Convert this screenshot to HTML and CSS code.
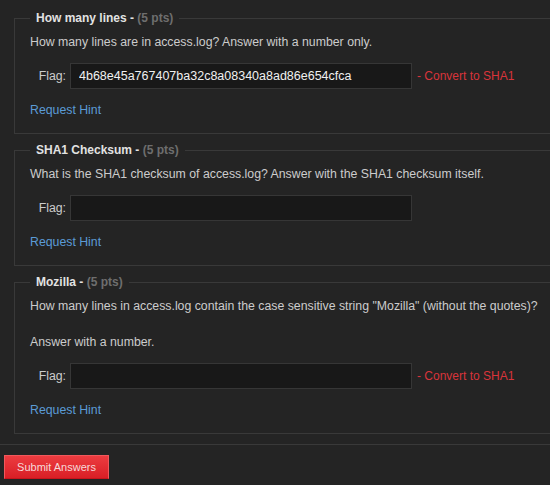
FILE: index.html
```html
<!DOCTYPE html>
<html>
<head>
<meta charset="utf-8">
<link rel="stylesheet" href="styles.css">
</head>
<body>
<div class="page">
  <form class="quiz">
    <fieldset class="question">
      <legend class="q-title">How many lines - <span class="pts">(5 pts)</span></legend>
      <p class="q-desc">How many lines are in access.log? Answer with a number only.</p>
      <div class="flag-row">
        <label class="flag-label">Flag:</label>
        <input class="flag-input" type="text" value="4b68e45a767407ba32c8a08340a8ad86e654cfca">
        <a class="convert">- Convert to SHA1</a>
      </div>
      <a class="hint">Request Hint</a>
    </fieldset>

    <fieldset class="question">
      <legend class="q-title">SHA1 Checksum - <span class="pts">(5 pts)</span></legend>
      <p class="q-desc">What is the SHA1 checksum of access.log? Answer with the SHA1 checksum itself.</p>
      <div class="flag-row">
        <label class="flag-label">Flag:</label>
        <input class="flag-input" type="text" value="">
      </div>
      <a class="hint">Request Hint</a>
    </fieldset>

    <fieldset class="question">
      <legend class="q-title">Mozilla - <span class="pts">(5 pts)</span></legend>
      <p class="q-desc">How many lines in access.log contain the case sensitive string "Mozilla" (without the quotes)?<br><br>Answer with a number.</p>
      <div class="flag-row">
        <label class="flag-label">Flag:</label>
        <input class="flag-input" type="text" value="">
        <a class="convert">- Convert to SHA1</a>
      </div>
      <a class="hint">Request Hint</a>
    </fieldset>

    <div class="actions">
      <button class="submit" type="button">Submit Answers</button>
    </div>
  </form>
</div>
</body>
</html>
```

FILE: styles.css
```css
html, body {
  margin: 0;
  padding: 0;
  background: #242424;
  overflow: hidden;
}

body {
  font-family: "Liberation Sans", Arial, sans-serif;
  font-size: 12px;
  line-height: 18px;
  color: #cccccc;
}

.page {
  width: 550px;
  height: 485px;
  overflow: hidden;
}

.quiz {
  width: 600px;
  padding-top: 9px;
}

.question {
  margin: 0 0 7px 14px;
  padding: 0 15px 14px 15px;
  border: 1px solid #393939;
  width: 560px;
  box-sizing: border-box;
}

.q-title {
  padding: 0 6px;
  font-weight: bold;
  font-size: 12px;
  line-height: 18px;
  color: #e2e2e2;
}

.pts {
  color: #6e6e6e;
}

.q-desc {
  margin: 6px 0 12px 0;
  font-size: 12.3px;
}

.flag-row {
  display: flex;
  align-items: center;
  height: 26px;
  margin-bottom: 12px;
}

.flag-label {
  width: 36px;
  text-align: right;
  margin-right: 4px;
  font-size: 12.3px;
  color: #cccccc;
}

.flag-input {
  width: 342px;
  height: 26px;
  box-sizing: border-box;
  margin: 0;
  padding: 0 8px;
  background: #181818;
  border: 1px solid #363636;
  color: #f0f0f0;
  font-family: "Liberation Sans", Arial, sans-serif;
  font-size: 12.5px;
  outline: none;
}

.convert {
  margin-left: 5px;
  color: #d9343b;
}

.hint {
  display: block;
  font-size: 12.3px;
  color: #5b9bd6;
}

.actions {
  border-top: 1px solid #393939;
  margin-top: 10px;
  padding: 10px 0 0 4px;
}

.submit {
  width: 105px;
  height: 24px;
  padding: 0;
  border: 1px solid #f0585c;
  border-bottom-color: #c8141b;
  background: linear-gradient(#ec3c40, #d91f26);
  color: #f6d9d9;
  font-family: "Liberation Sans", Arial, sans-serif;
  font-size: 11px;
}
```
